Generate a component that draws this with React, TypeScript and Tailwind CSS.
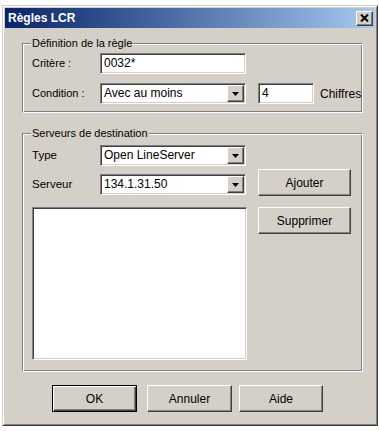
import React from 'react';

const sunken =
  'border border-t-[#808080] border-l-[#808080] border-r-white border-b-white shadow-[inset_1px_1px_0_#404040,inset_-1px_-1px_0_#d4d0c8]';
const raised =
  'border border-t-white border-l-white border-r-[#404040] border-b-[#404040] shadow-[inset_-1px_-1px_0_#808080,inset_1px_1px_0_#d4d0c8]';
const etched =
  'border border-t-[#808080] border-l-[#808080] border-r-white border-b-white shadow-[inset_1px_1px_0_#fff,inset_-1px_-1px_0_#808080]';

function Arrow() {
  return (
    <svg width="7" height="4" viewBox="0 0 7 4">
      <polygon points="0,0 7,0 3.5,4" fill="#000" />
    </svg>
  );
}

function Combo({ value, width = 'w-[146px]' }: { value: string; width?: string }) {
  return (
    <div className={`${width} h-[21px] bg-white ${sunken} p-[1px] flex`}>
      <div className="flex-1 pl-[2px] text-[12px] leading-[17px] text-black whitespace-nowrap overflow-hidden">
        {value}
      </div>
      <div className={`w-[17px] h-[17px] bg-[#d4d0c8] ${raised} flex items-center justify-center`}>
        <Arrow />
      </div>
    </div>
  );
}

function Field({ value, width }: { value: string; width: string }) {
  return (
    <div className={`${width} h-[21px] bg-white ${sunken} px-[3px] text-[12px] leading-[19px] text-black`}>
      {value}
    </div>
  );
}

function Button({ label, width = 'w-[93px]', isDefault = false }: { label: string; width?: string; isDefault?: boolean }) {
  if (isDefault) {
    return (
      <button className={`${width} h-[27px] bg-[#d4d0c8] border border-black shadow-[inset_1px_1px_0_#fff,inset_-1px_-1px_0_#404040,inset_-2px_-2px_0_#808080] text-[12px] text-black`}>
        {label}
      </button>
    );
  }
  return (
    <button className={`${width} h-[27px] bg-[#d4d0c8] ${raised} text-[12px] text-black`}>
      {label}
    </button>
  );
}

export default function App() {
  return (
    <div
      className="w-[379px] h-[431px] bg-white pt-[5px] pl-[2px] overflow-hidden"
      style={{ fontFamily: '"Liberation Sans", Arial, sans-serif' }}
    >
      <div className="w-[376px] h-[421px] bg-[#d4d0c8] border border-t-[#d4d0c8] border-l-[#d4d0c8] border-r-[#404040] border-b-[#404040] shadow-[inset_1px_1px_0_#fff,inset_-1px_-1px_0_#808080] p-[2px] flex flex-col">
        {/* title bar */}
        <div className="h-[20px] bg-linear-to-r from-[#0a246a] to-[#a6caf0] flex items-center justify-between pl-[3px] pr-[2px]">
          <span className="text-white font-bold text-[12px]">Règles LCR</span>
          <div className={`w-[17px] h-[15px] bg-[#d4d0c8] ${raised} flex items-center justify-center`}>
            <svg width="9" height="8" viewBox="0 0 9 8">
              <path d="M1 0.5 L8 7.5 M8 0.5 L1 7.5" stroke="#000" strokeWidth="2" />
            </svg>
          </div>
        </div>

        {/* Définition de la règle */}
        <fieldset className={`ml-[17px] mt-[9px] w-[341px] ${etched} pl-[9px] pb-[8px] text-black`}>
          <legend className="ml-[-1px] px-[1px] text-[11px] leading-[13px] bg-[#d4d0c8]">Définition de la règle</legend>
          <div className="mt-[3px] flex items-center">
            <span className="w-[68px] text-[11px]">Critère :</span>
            <Field value="0032*" width="w-[146px]" />
          </div>
          <div className="mt-[9px] flex items-center">
            <span className="w-[68px] text-[11px]">Condition :</span>
            <Combo value="Avec au moins" />
            <div className="ml-[12px]">
              <Field value="4" width="w-[56px]" />
            </div>
            <span className="ml-[6px] text-[12px] whitespace-nowrap">Chiffres</span>
          </div>
        </fieldset>

        {/* Serveurs de destination */}
        <fieldset className={`ml-[17px] mt-[14px] w-[341px] ${etched} pl-[9px] pb-[11px] text-black`}>
          <legend className="ml-[-1px] px-[1px] text-[11px] leading-[13px] bg-[#d4d0c8]">Serveurs de destination</legend>
          <div className="flex">
            <div className="w-[215px] flex flex-col">
              <div className="mt-[5px] flex items-center">
                <span className="w-[68px] text-[11.5px]">Type</span>
                <Combo value="Open LineServer" />
              </div>
              <div className="mt-[8px] flex items-center">
                <span className="w-[68px] text-[11.5px]">Serveur</span>
                <Combo value="134.1.31.50" />
              </div>
              <div className={`mt-[12px] w-[215px] h-[153px] bg-white ${sunken}`} />
            </div>
            <div className="ml-[11px] mt-[29px] flex flex-col gap-[11px]">
              <Button label="Ajouter" />
              <Button label="Supprimer" />
            </div>
          </div>
        </fieldset>

        {/* bottom buttons */}
        <div className="mt-[13px] ml-[47px] flex">
          <Button label="OK" width="w-[85px]" isDefault />
          <div className="ml-[10px]">
            <Button label="Annuler" width="w-[85px]" />
          </div>
          <div className="ml-[7px]">
            <Button label="Aide" width="w-[84px]" />
          </div>
        </div>
      </div>
    </div>
  );
}
